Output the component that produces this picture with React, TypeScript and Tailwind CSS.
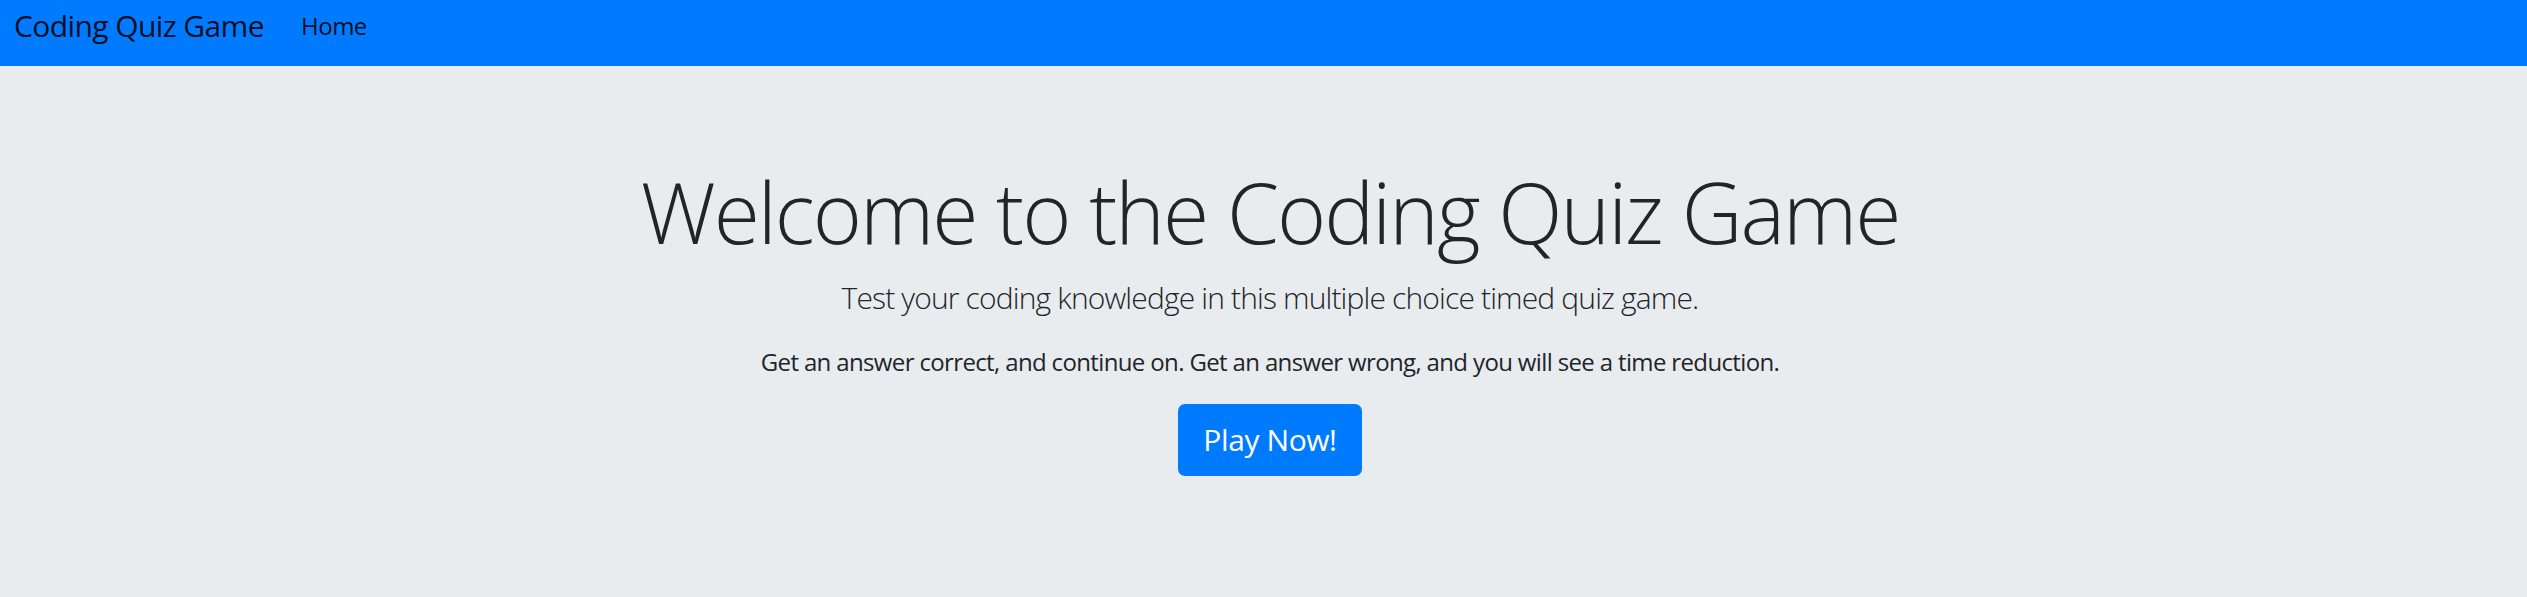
import React from 'react'

export default function App() {
  return (
    <div className="min-h-screen flex flex-col bg-[#e9ecef] text-[#212529] font-['Open_Sans',sans-serif]">
      {/* navbar */}
      <nav className="h-[66px] bg-[#007bff] flex items-start px-[14px] shrink-0">
        <a href="#" className="mt-[3px] text-[30px] leading-[45px] text-black/90 tracking-[-0.6px]">
          Coding Quiz Game
        </a>
        <a href="#" className="mt-[8px] ml-[37px] text-[24px] leading-[36px] text-black/90 tracking-[-0.5px]">
          Home
        </a>
      </nav>

      {/* jumbotron */}
      <main className="flex-1 flex flex-col items-center text-center pt-[96px] pl-[13px]">
        <h1 className="text-[84px] leading-[100.8px] font-light tracking-[-2px] mb-[12px]">
          Welcome to the Coding Quiz Game
        </h1>
        <p className="text-[30px] leading-[45px] font-light tracking-[-0.85px] mb-[24px]">
          Test your coding knowledge in this multiple choice timed quiz game.
        </p>
        <p className="text-[24px] leading-[36px] tracking-[-0.64px] mb-[24px]">
          Get an answer correct, and continue on. Get an answer wrong, and you will see a time reduction.
        </p>
        <button className="h-[72px] px-[25px] rounded-[7px] bg-[#007bff] text-white text-[30px] leading-[45px] tracking-[-0.4px]">
          Play Now!
        </button>
      </main>
    </div>
  )
}
